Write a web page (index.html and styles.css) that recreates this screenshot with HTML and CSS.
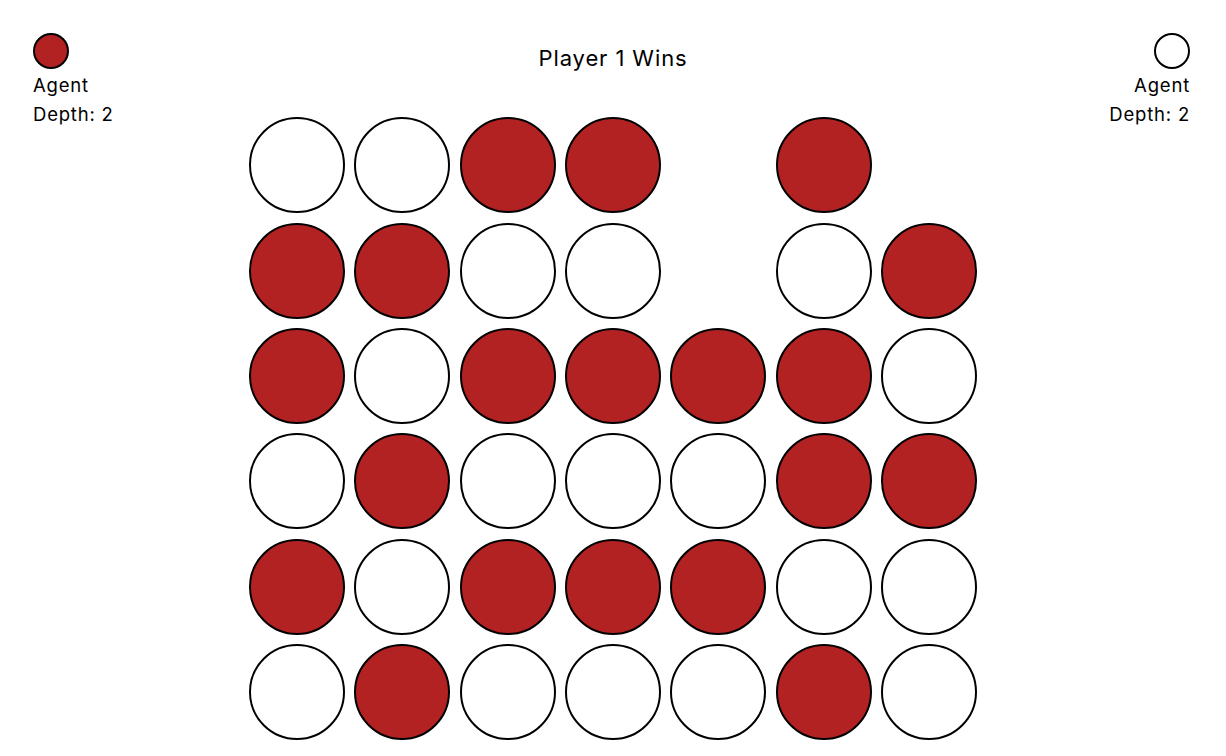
FILE: index.html
```html
<!DOCTYPE html>
<html>
<head>
<meta charset="utf-8">
<link rel="stylesheet" href="styles.css">
</head>
<body>
<div class="page">
  <div class="player player-left">
    <div class="disc disc-small red"></div>
    <div class="info">
      <div>Agent</div>
      <div>Depth: 2</div>
    </div>
  </div>
  <div class="center">
    <div class="title">Player 1 Wins</div>
    <div class="board">
      <div class="disc white"></div><div class="disc white"></div><div class="disc red"></div><div class="disc red"></div><div class="slot"></div><div class="disc red"></div><div class="slot"></div>
      <div class="disc red"></div><div class="disc red"></div><div class="disc white"></div><div class="disc white"></div><div class="slot"></div><div class="disc white"></div><div class="disc red"></div>
      <div class="disc red"></div><div class="disc white"></div><div class="disc red"></div><div class="disc red"></div><div class="disc red"></div><div class="disc red"></div><div class="disc white"></div>
      <div class="disc white"></div><div class="disc red"></div><div class="disc white"></div><div class="disc white"></div><div class="disc white"></div><div class="disc red"></div><div class="disc red"></div>
      <div class="disc red"></div><div class="disc white"></div><div class="disc red"></div><div class="disc red"></div><div class="disc red"></div><div class="disc white"></div><div class="disc white"></div>
      <div class="disc white"></div><div class="disc red"></div><div class="disc white"></div><div class="disc white"></div><div class="disc white"></div><div class="disc red"></div><div class="disc white"></div>
    </div>
  </div>
  <div class="player player-right">
    <div class="disc disc-small white"></div>
    <div class="info">
      <div>Agent</div>
      <div>Depth: 2</div>
    </div>
  </div>
</div>
</body>
</html>
```

FILE: styles.css
```css
html, body {
  margin: 0;
  padding: 0;
  background: #ffffff;
}

body {
  font-family: Inter, "Liberation Sans", Arial, sans-serif;
  color: #000000;
}

.page {
  display: grid;
  grid-template-columns: 1fr 737px 1fr;
  width: 1226px;
  height: 756px;
  overflow: hidden;
}

.player {
  display: flex;
  flex-direction: column;
  padding-top: 33px;
  font-size: 18.5px;
  line-height: 29px;
  letter-spacing: 0.8px;
}

.player-left {
  padding-left: 33px;
  align-items: flex-start;
}

.player-right {
  padding-right: 36px;
  align-items: flex-end;
  text-align: right;
}

.info {
  margin-top: 2px;
}

.center {
  display: flex;
  flex-direction: column;
  align-items: center;
}

.title {
  padding-top: 44px;
  font-size: 22px;
  line-height: 28px;
  height: 28px;
  letter-spacing: 0.9px;
}

.board {
  margin-top: 40.6px;
  width: 737px;
  display: grid;
  grid-template-columns: repeat(7, 1fr);
  grid-auto-rows: 105.333px;
  align-items: center;
  justify-items: center;
}

.disc {
  box-sizing: border-box;
  width: 96px;
  height: 96px;
  border-radius: 50%;
  border: 2px solid #000000;
}

.disc-small {
  width: 36px;
  height: 36px;
}

.slot {
  width: 96px;
  height: 96px;
}

.red {
  background: #b22222;
}

.white {
  background: #ffffff;
}
```
